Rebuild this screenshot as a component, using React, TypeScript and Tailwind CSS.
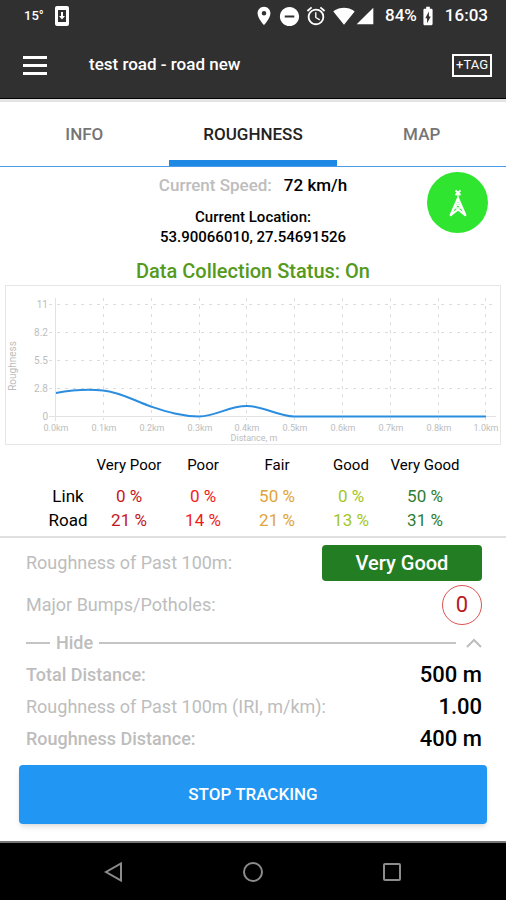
import { useState } from 'react';
import {
  MdAlarm,
  MdBatteryChargingFull,
  MdDoNotDisturbOn,
  MdLocationOn,
  MdSignalCellular4Bar,
  MdSignalWifi4Bar,
} from 'react-icons/md';

const tabs = ['INFO', 'ROUGHNESS', 'MAP'];

const grades = [
  { name: 'Very Poor', link: 0, road: 21, color: 'text-[#c4161c]' },
  { name: 'Poor', link: 0, road: 14, color: 'text-[#f01c1c]' },
  { name: 'Fair', link: 50, road: 21, color: 'text-[#dfa43a]' },
  { name: 'Good', link: 0, road: 13, color: 'text-[#a3c626]' },
  { name: 'Very Good', link: 50, road: 31, color: 'text-[#2e7d32]' },
];

const yTicks = [
  { label: '11', y: 18 },
  { label: '8.2', y: 46 },
  { label: '5.5', y: 74 },
  { label: '2.8', y: 102 },
  { label: '0', y: 130 },
];

const xTicks = [
  { label: '0.0km', x: 50 },
  { label: '0.1km', x: 98 },
  { label: '0.2km', x: 146 },
  { label: '0.3km', x: 194 },
  { label: '0.4km', x: 241 },
  { label: '0.5km', x: 289 },
  { label: '0.6km', x: 337 },
  { label: '0.7km', x: 385 },
  { label: '0.8km', x: 433 },
  { label: '1.0km', x: 480 },
];

const StatusBar = () => (
  <div className="flex h-8 items-center justify-between pl-6 pr-[18px] text-white">
    <div className="flex items-center gap-[10px]">
      <span className="text-[13px] font-medium">15°</span>
      <svg viewBox="0 0 16 22" className="h-[22px] w-4" aria-hidden="true">
        <rect x="1" y="1" width="14" height="20" rx="2" fill="#fff" />
        <rect x="4" y="5" width="8" height="12" fill="#303030" />
        <path d="M7 7h2v4h2l-3 3.5L5 11h2z" fill="#fff" />
      </svg>
    </div>
    <div className="flex items-center">
      <MdLocationOn className="mr-[3px] size-[22px]" />
      <MdDoNotDisturbOn className="mr-1 size-[23px]" />
      <MdAlarm className="mr-[6px] size-[22px]" />
      <MdSignalWifi4Bar className="size-[22px]" />
      <MdSignalCellular4Bar className="mr-[10px] size-5" />
      <span className="text-[17px] font-medium">84%</span>
      <MdBatteryChargingFull className="mr-[6px] size-[22px]" />
      <span className="text-[17px] font-medium">16:03</span>
    </div>
  </div>
);

const TowerIcon = () => (
  <svg viewBox="0 0 20 28" className="h-7 w-5" fill="none" stroke="#fff" aria-hidden="true">
    <path d="M7.500 1.500l5 4.500M12.500 1.500l-5 4.500" strokeWidth="1.800" />
    <path d="M10 4v6" strokeWidth="1.400" />
    <path d="M10 9.500L2.800 26M10 9.500l7.200 16.500" strokeWidth="2.400" strokeLinecap="round" />
    <path d="M8.300 13.500L13.500 19M11.700 13.500L6.500 19M6 19h8" strokeWidth="1.300" />
    <path d="M3 26l7-5.500 7 5.500" strokeWidth="2.200" strokeLinecap="round" />
  </svg>
);

const Chart = () => (
  <svg
    viewBox="0 0 494 158"
    className="block w-full"
    fontSize="9"
    fill="#bdbdbd"
    role="img"
    aria-label="Roughness by distance"
  >
    {yTicks.map((t) => (
      <g key={t.label}>
        {t.y < 130 && <path d={`M43 ${t.y}.5H490`} stroke="#dcdcdc" strokeDasharray="3 5" />}
        <text x="42" y={t.y + 4} textAnchor="end" fontSize="10">{t.label}</text>
      </g>
    ))}
    {xTicks.map((t) => (
      <g key={t.label}>
        {t.x > 50 && <path d={`M${t.x - 1}.5 12V134`} stroke="#dcdcdc" strokeDasharray="3 5" />}
        <text x={t.x} y="145" textAnchor="middle">{t.label}</text>
      </g>
    ))}
    <path d="M49.5 12V135M43 130.5H490" stroke="#e2e2e2" fill="none" />
    <text x="248" y="155" textAnchor="middle" fontSize="9">Distance, m</text>
    <text transform="translate(10 80) rotate(-90)" textAnchor="middle" fontSize="10">Roughness</text>
    <path
      d="M50 107C66 104 82 103 97 104.500C114 106 129 115 145 120.500C162 126 174 130 193 130.500C211 130 222 120 241 120C258 120 271 130 288 130.500H480"
      stroke="#2a8de0"
      strokeWidth="2"
      fill="none"
    />
  </svg>
);

const App = () => {
  const [activeTab, setActiveTab] = useState('ROUGHNESS');
  const [open, setOpen] = useState(true);

  return (
    <div className="flex min-h-screen flex-col bg-white font-['Roboto',sans-serif] text-black">
      <header className="border-b border-black bg-[#303030]">
        <StatusBar />
        <div className="flex h-[66px] items-center pl-[23px] pr-[14px] text-white">
          <button aria-label="Menu" className="mr-[42px] flex w-6 flex-col gap-[5px]">
            <span className="h-[3px] w-full bg-white" />
            <span className="h-[3px] w-full bg-white" />
            <span className="h-[3px] w-full bg-white" />
          </button>
          <h1 className="flex-1 text-[17px] font-medium">test road - road new</h1>
          <button className="flex h-[23px] items-center border-2 border-white px-[2px] text-[13px]">+TAG</button>
        </div>
      </header>

      <nav className="flex border-b border-t-3 border-b-[#4b9bea] border-t-[#e4e4e4]">
        {tabs.map((tab) => (
          <button
            key={tab}
            onClick={() => setActiveTab(tab)}
            className={`h-16 flex-1 border-b-6 pt-[7px] text-[17px] font-medium ${
              activeTab === tab ? 'border-[#1e88e5] text-[#222]' : 'border-transparent text-[#757575]'
            }`}
          >
            {tab}
          </button>
        ))}
      </nav>

      <main className="flex-1">
        <section className="relative pt-1 text-center">
          <p className="text-[17px] leading-7 font-medium">
            <span className="mr-3 text-[#bdbdbd]">Current Speed:</span>
            <span>72 km/h</span>
          </p>
          <div className="mt-2 text-[15px] leading-5 font-medium">
            <p>Current Location:</p>
            <p>53.90066010, 27.54691526</p>
          </div>
          <p className="mt-[10px] text-xl leading-7 font-medium text-[#559a1c]">Data Collection Status: On</p>
          <button
            aria-label="Signal"
            className="absolute top-[5px] right-[18px] flex size-[61px] items-center justify-center rounded-full bg-[#2fe52f]"
          >
            <TowerIcon />
          </button>
        </section>

        <div className="mx-[5px] border border-[#e6e6e6]">
          <Chart />
        </div>

        <div className="border-b-2 border-[#e0e0e0] px-11 pt-2 pb-1">
          <table className="w-full table-fixed text-center">
            <thead>
              <tr className="h-6 text-[15px] whitespace-nowrap">
                <td className="w-12"></td>
                {grades.map((g) => (
                  <th key={g.name} className="font-normal">{g.name}</th>
                ))}
              </tr>
            </thead>
            <tbody className="text-[17px] leading-6">
              <tr>
                <th className="pt-[7px] font-normal">Link</th>
                {grades.map((g) => (
                  <td key={g.name} className={`pt-[7px] ${g.color}`}>{g.link} %</td>
                ))}
              </tr>
              <tr>
                <th className="font-normal">Road</th>
                {grades.map((g) => (
                  <td key={g.name} className={g.color}>{g.road} %</td>
                ))}
              </tr>
            </tbody>
          </table>
        </div>

        <section className="pt-[7px] pr-6 pl-[26px] text-lg text-[#bdbdbd]">
          <div className="flex items-center justify-between">
            <span>Roughness of Past 100m:</span>
            <span className="flex h-9 w-40 items-center justify-center rounded-sm bg-[#237d23] text-xl font-medium text-white">
              Very Good
            </span>
          </div>
          <div className="mt-1 flex items-center justify-between">
            <span>Major Bumps/Potholes:</span>
            <span className="flex size-10 items-center justify-center rounded-full border border-[#d9534f] text-[22px] text-[#b71c1c]">
              0
            </span>
          </div>
          <button
            onClick={() => setOpen(!open)}
            aria-expanded={open}
            className="mt-[2px] flex h-8 w-full items-center gap-[6px] font-medium"
          >
            <span className="h-[2px] w-6 bg-[#c4c4c4]" />
            {open ? 'Hide' : 'Show'}
            <span className="h-[2px] flex-1 bg-[#c4c4c4]" />
            <svg viewBox="0 0 16 10" className="ml-1 h-[10px] w-4" fill="none" stroke="#bdbdbd" strokeWidth="2">
              <path d={open ? 'M1 9l7-7 7 7' : 'M1 1l7 7 7-7'} />
            </svg>
          </button>
          {open && (
            <dl>
              <div className="flex h-8 items-center justify-between">
                <dt className="font-medium">Total Distance:</dt>
                <dd className="text-[22px] font-medium text-black">500 m</dd>
              </div>
              <div className="flex h-8 items-center justify-between">
                <dt>Roughness of Past 100m (IRI, m/km):</dt>
                <dd className="text-[22px] font-medium text-black">1.00</dd>
              </div>
              <div className="flex h-8 items-center justify-between">
                <dt className="font-medium">Roughness Distance:</dt>
                <dd className="text-[22px] font-medium text-black">400 m</dd>
              </div>
            </dl>
          )}
        </section>

        <div className="px-[19px] pt-[10px] pb-[17px]">
          <button className="h-[59px] w-full rounded bg-[#2196f3] text-[17px] font-medium text-white shadow-md">
            STOP TRACKING
          </button>
        </div>
      </main>

      <footer className="flex h-[59px] items-center justify-around border-t-2 border-[#777] bg-black px-11">
        <button aria-label="Back">
          <svg viewBox="0 0 20 20" className="size-5" fill="none" stroke="#8c8c8c" strokeWidth="2">
            <path d="M17 1.500v17L2 10z" />
          </svg>
        </button>
        <button aria-label="Home">
          <svg viewBox="0 0 20 20" className="size-5" fill="none" stroke="#8c8c8c" strokeWidth="2">
            <circle cx="10" cy="10" r="9" />
          </svg>
        </button>
        <button aria-label="Recent apps">
          <svg viewBox="0 0 20 20" className="size-5" fill="none" stroke="#8c8c8c" strokeWidth="2">
            <rect x="2" y="2" width="16" height="16" rx="1" />
          </svg>
        </button>
      </footer>
    </div>
  );
};

export default App;
